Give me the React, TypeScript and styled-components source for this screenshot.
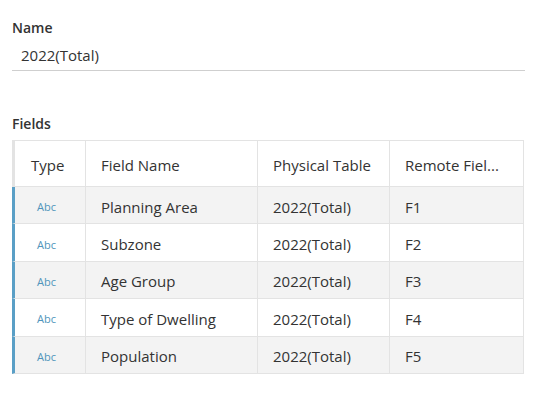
import React from "react";
import styled, { createGlobalStyle } from "styled-components";

const Global = createGlobalStyle`
  html, body { margin: 0; padding: 0; background: #fff; }
  body { font-family: "Open Sans", "Noto Sans", sans-serif; color: #333; }
`;

const Page = styled.div`
  padding: 18px 13px 0 12px;
  width: 538px;
  box-sizing: border-box;
`;

const Label = styled.div`
  font-size: 14px;
  font-weight: 600;
  color: #333;
  line-height: 20px;
`;

const NameValue = styled.div`
  font-size: 15px;
  color: #333;
  padding: 7px 0 5px 9px;
  line-height: 20px;
  border-bottom: 1px solid #cfcfcf;
  margin-bottom: 43px;
`;

const Table = styled.div`
  margin-top: 6px;
  width: 512px;
  border-top: 1px solid #e3e3e3;
  border-right: 1px solid #e3e3e3;
  box-sizing: border-box;
`;

const Row = styled.div<{ $bar: string; $bg: string; $h: number }>`
  display: grid;
  grid-template-columns: 71px 172px 132px 1fr;
  height: ${(p) => p.$h}px;
  box-sizing: border-box;
  border-left: 3px solid ${(p) => p.$bar};
  border-bottom: 1px solid #e3e3e3;
  background: ${(p) => p.$bg};
`;

const Cell = styled.div<{ $last?: boolean }>`
  display: flex;
  align-items: center;
  padding: 3px 0 0 15px;
  font-size: 15px;
  color: #333;
  border-right: ${(p) => (p.$last ? "none" : "1px solid #e3e3e3")};
  white-space: nowrap;
  overflow: hidden;
`;

const TypeCell = styled(Cell)`
  padding-left: 22px;
`;

const HeadTypeCell = styled(Cell)`
  padding-left: 16px;
`;

const Abc = styled.span`
  font-size: 11px;
  color: #4f95bb;
`;

const rows = [
  ["Planning Area", "F1"],
  ["Subzone", "F2"],
  ["Age Group", "F3"],
  ["Type of Dwelling", "F4"],
  ["Population", "F5"],
];

export default function App() {
  return (
    <Page>
      <Global />
      <Label>Name</Label>
      <NameValue>2022(Total)</NameValue>
      <Label>Fields</Label>
      <Table>
        <Row $bar="#e3e3e3" $bg="#fff" $h={46}>
          <HeadTypeCell>Type</HeadTypeCell>
          <Cell>Field Name</Cell>
          <Cell>Physical Table</Cell>
          <Cell $last>Remote Fiel...</Cell>
        </Row>
        {rows.map(([name, remote], i) => (
          <Row key={name} $bar="#5a9fc6" $bg={i % 2 === 0 ? "#f3f3f3" : "#fff"} $h={37.4}>
            <TypeCell>
              <Abc>Abc</Abc>
            </TypeCell>
            <Cell>{name}</Cell>
            <Cell>2022(Total)</Cell>
            <Cell $last>{remote}</Cell>
          </Row>
        ))}
      </Table>
    </Page>
  );
}
